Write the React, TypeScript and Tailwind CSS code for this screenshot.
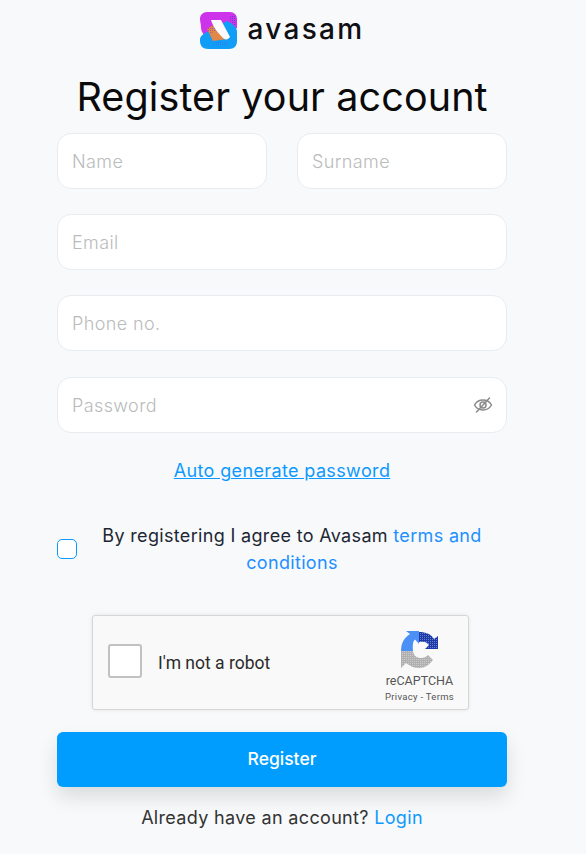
import React from 'react';

const font = "font-['Inter','Noto_Sans',sans-serif]";

const Logo: React.FC = () => (
  <svg width="37" height="37" viewBox="0 0 37 37" fill="none">
    <defs>
      <linearGradient id="logoBlue" x1="0" y1="37" x2="37" y2="14">
        <stop offset="0" stopColor="#1b86f0" />
        <stop offset="1" stopColor="#05baff" />
      </linearGradient>
      <pattern id="logoDots" width="2" height="2" patternUnits="userSpaceOnUse">
        <rect width="1" height="1" fill="#6a3ad8" />
      </pattern>
    </defs>
    <path d="M7 0H30C34 0 37 3 37 7V16L31 19L5 24C2 21 1 18 1 15C1 12 0 10 0 7C0 3 3 0 7 0Z" fill="#cc33ea" />
    <path d="M29 4H36V14L32 15Z" fill="url(#logoDots)" />
    <path d="M5 21L27 9C33 12 37 15 37 20V29C37 34 34 37 29 37H8C3 37 0 34 0 29V27C0 25 2 23 5 21Z" fill="url(#logoBlue)" />
    <path d="M7 17L15 12L27 27L13 29Z" fill="#e0874a" />
    <path d="M7 17L15 12L18 17L10 22Z" fill="url(#logoDots)" opacity="0.6" />
    <path d="M14 29H27L29 34H15Z" fill="url(#logoDots)" opacity="0.35" />
    <path d="M11 8H21L30 25C28 28 25 28 23 26C18 21 13 15 11 8Z" fill="#fbfbfd" />
  </svg>
);

const RecaptchaIcon: React.FC = () => (
  <svg width="38" height="38" viewBox="0 0 38 38" fill="none">
    <defs>
      <pattern id="capDots" width="2" height="2" patternUnits="userSpaceOnUse">
        <rect width="1" height="1" fill="#ffffff" opacity="0.35" />
      </pattern>
    </defs>
    <path d="M1 20C1 12 4 7 10 3L6 0H19V13L15 8.500C13 10 12.500 13 13 20Z" fill="#4a90f5" />
    <path d="M19 1C26 1 31 3 34 8L38 5V18H25L29 14C27 11 24 10 19 11Z" fill="#1c3aa9" />
    <path d="M1 20H13C14 25 17 27 21 27C24 27 26 26 28 24L33 29C29 34 25 37 19 37C14 37 10 35 6 32L1 37Z" fill="#b0b0b0" />
    <path d="M1 20H13C14 25 17 27 21 27C24 27 26 26 28 24L33 29C29 34 25 37 19 37C14 37 10 35 6 32L1 37Z" fill="url(#capDots)" />
    <path d="M19 1C26 1 31 3 34 8L38 5V18H25L29 14C27 11 24 10 19 11Z" fill="url(#capDots)" />
  </svg>
);

const EyeOff: React.FC = () => (
  <svg width="20" height="20" viewBox="0 0 20 20" fill="none" stroke="#8a8a8a" strokeWidth="1.500" strokeLinecap="round">
    <path d="M1.500 10C3.500 6.500 6.500 5 10 5C13.500 5 16.500 6.500 18.500 10C16.500 13.500 13.500 15 10 15C6.500 15 3.500 13.500 1.500 10Z" />
    <circle cx="10" cy="10" r="3" />
    <path d="M3.500 17L16.500 3" />
  </svg>
);

const Field: React.FC<{ placeholder: string; className?: string }> = ({ placeholder, className = '' }) => (
  <input
    placeholder={placeholder}
    className={`h-[56px] rounded-[14px] border border-[#e9ecef] bg-white pl-[14px] pr-4 text-[18px] font-light tracking-[0.4px] outline-none placeholder:text-[#b9bcbc] ${className}`}
  />
);

const App: React.FC = () => {
  return (
    <div className={`h-[854px] overflow-hidden bg-[#f8f9fb] ${font}`}>
      <div className="flex w-[564px] flex-col items-center">
        <div className="mt-[12px] flex items-center gap-[11px]">
          <Logo />
          <span className="-mt-[3px] text-[28px] font-medium leading-[37px] tracking-[2.300px] text-[#0f0f14]">avasam</span>
        </div>

        <h1 className="mt-[14px] text-[39.500px] font-normal leading-[68px] tracking-[0.1px] text-[#0a0a0a]">
          Register your account
        </h1>

        <div className="mt-[2px] flex w-[450px] flex-col">
          <div className="flex gap-[30px]">
            <Field placeholder="Name" className="w-[210px]" />
            <Field placeholder="Surname" className="w-[210px]" />
          </div>
          <Field placeholder="Email" className="mt-[25px] w-full" />
          <Field placeholder="Phone no." className="mt-[25px] w-full" />
          <div className="relative mt-[26px]">
            <Field placeholder="Password" className="w-full" />
            <span className="absolute right-[14px] top-[18px]">
              <EyeOff />
            </span>
          </div>

          <a
            href="#"
            className="mt-[25px] text-center text-[18px] leading-[26px] tracking-[0.37px] text-[#0d99ff] underline"
          >
            Auto generate password
          </a>

          <div className="mt-[38px] flex items-center">
            <input
              type="checkbox"
              className="h-[20px] w-[20px] shrink-0 appearance-none rounded-[5px] border border-[#0d99ff] bg-white"
            />
            <div className="flex-1 text-center text-[18px] leading-[27px] tracking-[0.33px] text-[#1c2733]">
              <p>
                By registering I agree to Avasam <span className="text-[#1e90ff]">terms and</span>
              </p>
              <p className="text-[#1e90ff]">conditions</p>
            </div>
          </div>

          <div className="ml-[35px] mt-[39px] flex h-[95px] w-[377px] items-center rounded-[3px] border border-[#d6d6d6] bg-[#f9f9f9] pl-[15px] pr-[14px] shadow-[0_0_4px_rgba(0,0,0,0.08)]">
            <div className="mb-[4px] h-[34px] w-[34px] rounded-[3px] border-2 border-[#c1c1c1] bg-white" />
            <span className="ml-[16px] mt-[2px] flex-1 font-['Roboto',sans-serif] text-[17.500px] text-[#2b2b2b]">
              I'm not a robot
            </span>
            <div className="flex flex-col items-center pt-[8px] font-['Roboto',sans-serif]">
              <RecaptchaIcon />
              <span className="mt-[4px] text-[12.500px] leading-[16px] text-[#555]">reCAPTCHA</span>
              <span className="mt-[2px] text-[9.500px] leading-[12px] tracking-[0.3px] text-[#555]">Privacy - Terms</span>
            </div>
          </div>

          <button className="mt-[22px] h-[55px] w-full rounded-[6px] bg-[#009dff] text-[17.500px] font-medium text-white shadow-[0_10px_20px_rgba(0,0,0,0.12)]">
            Register
          </button>

          <p className="mt-[18px] text-center text-[18px] leading-[26px] tracking-[0.33px] text-[#333]">
            Already have an account? <span className="text-[#0d99ff]">Login</span>
          </p>
        </div>
      </div>
    </div>
  );
};

export default App;
